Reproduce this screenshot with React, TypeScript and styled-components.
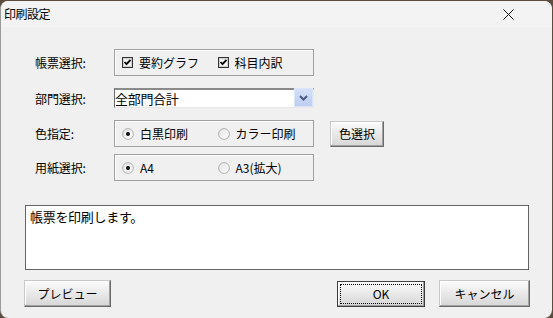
import React from 'react';
import styled, { createGlobalStyle } from 'styled-components';

const GlobalStyle = createGlobalStyle`
  html, body {
    margin: 0;
    padding: 0;
    background: #5c4c40;
  }
  body {
    font-family: "Noto Sans CJK JP", "Liberation Sans", sans-serif;
    font-size: 12px;
    color: #000;
  }
`;

const Window = styled.div`
  width: 552px;
  height: 317px;
  margin-top: 1px;
  background: #f0f0f0;
  border-radius: 8px;
  border-left: 1px solid #9a9a9a;
  box-sizing: border-box;
  overflow: hidden;
  display: flex;
  flex-direction: column;
`;

const TitleBar = styled.div`
  height: 26px;
  background: #f3f3f3;
  display: flex;
  align-items: center;
  justify-content: space-between;
  padding: 0 38px 0 3px;
  line-height: 1;
  flex-shrink: 0;
`;

const Title = styled.span`
  font-size: 12px;
  letter-spacing: -0.5px;
  margin-top: -1px;
`;

const Body = styled.div`
  flex: 1;
  padding: 22px 0 0 23px;
  display: flex;
  flex-direction: column;
`;

const Row = styled.div<{ $top: number }>`
  display: flex;
  align-items: center;
  margin-top: ${(p) => p.$top}px;
  padding-left: 11px;
`;

const Label = styled.div`
  width: 79px;
  font-size: 12px;
  letter-spacing: -0.1px;
`;

const Group = styled.div`
  width: 200px;
  height: 27px;
  box-sizing: border-box;
  border: 1px solid #a0a0a0;
  box-shadow: inset 1px 1px #ffffff;
  display: flex;
  align-items: center;
  padding-left: 7px;
`;

const Option = styled.div`
  width: 97px;
  display: flex;
  align-items: center;
  gap: 6px;
  font-size: 12px;
  white-space: nowrap;
`;

const Combo = styled.div`
  width: 200px;
  height: 20px;
  box-sizing: border-box;
  background: #fff;
  border-top: 2px solid #8a8a8a;
  border-left: 1px solid #6a6a6a;
  border-bottom: 1px solid #e8e8e8;
  border-right: 1px solid #e8e8e8;
  display: flex;
  align-items: center;
  justify-content: space-between;
  font-size: 13px;
`;

const ComboText = styled.span`
  letter-spacing: -0.3px;
`;

const DropButton = styled.div`
  width: 19px;
  height: 19px;
  margin-top: -2px;
  background: linear-gradient(#d4e0f8, #bccdf2);
  border: 1px solid #dce6fa;
  box-sizing: border-box;
  display: flex;
  align-items: center;
  justify-content: center;
`;

const Button = styled.button<{ $w: number; $h?: number; $focus?: boolean }>`
  width: ${(p) => p.$w}px;
  height: ${(p) => p.$h ?? 26}px;
  box-sizing: border-box;
  padding: 0;
  font-family: "Noto Sans CJK JP", "Liberation Sans", sans-serif;
  font-size: 12px;
  color: #000;
  background: linear-gradient(#fbfbfb, #d6d6d6);
  border-style: solid;
  border-width: 1px;
  border-color: ${(p) => (p.$focus ? '#3c3c3c' : '#c8c8c8 #6a6a6a #6a6a6a #c8c8c8')};
  box-shadow: inset -1px -1px #a0a0a0, inset 1px 1px #ffffff;
  position: relative;
  display: flex;
  align-items: center;
  justify-content: center;
  ${(p) =>
    p.$focus
      ? `&::after {
    content: '';
    position: absolute;
    inset: 2px;
    border: 1px dotted #000;
  }`
      : ''}
`;

const TextBox = styled.div`
  margin: 24px 0 0 1px;
  width: 504px;
  height: 65px;
  box-sizing: border-box;
  background: #fff;
  border: 1px solid #646464;
  padding: 1px 4px;
  font-size: 13px;
  letter-spacing: -0.3px;
`;

const Footer = styled.div`
  display: flex;
  align-items: center;
  margin-top: 10px;
  width: 506px;
`;

const Spacer = styled.div`
  flex: 1;
`;

const Check = ({ on }: { on: boolean }) => (
  <svg width="11" height="11" viewBox="0 0 11 11">
    <rect x="0.5" y="0.5" width="10" height="10" fill="#fff" stroke="#333" />
    <rect x="1.5" y="1.5" width="8" height="8" fill="#f4f4f4" stroke="#d0d0d0" />
    {on && <path d="M2.5 5 L4.5 7.2 L8.5 2.8" fill="none" stroke="#000" strokeWidth="1.8" />}
  </svg>
);

const Radio = ({ on }: { on: boolean }) => (
  <svg width="12" height="12" viewBox="0 0 12 12">
    <defs>
      <linearGradient id="rg" x1="0" y1="0" x2="1" y2="1">
        <stop offset="0" stopColor="#e4e4e4" />
        <stop offset="1" stopColor="#ffffff" />
      </linearGradient>
    </defs>
    <circle cx="6" cy="6" r="5.4" fill="url(#rg)" stroke="#a8a8a8" strokeWidth="0.9" />
    {on && <circle cx="6" cy="6" r="2" fill="#111" />}
  </svg>
);

const Chevron = () => (
  <svg width="9" height="6" viewBox="0 0 9 6">
    <path d="M1 1 L4.5 4.5 L8 1" fill="none" stroke="#4a5a7c" strokeWidth="2" />
  </svg>
);

const CloseIcon = () => (
  <svg width="11" height="11" viewBox="0 0 11 11">
    <path d="M0.5 0.5 L10.5 10.5 M10.5 0.5 L0.5 10.5" stroke="#111" strokeWidth="1" />
  </svg>
);

export default function App() {
  return (
    <>
      <GlobalStyle />
      <Window>
        <TitleBar>
          <Title>印刷設定</Title>
          <CloseIcon />
        </TitleBar>
        <Body>
          <Row $top={0}>
            <Label>帳票選択:</Label>
            <Group>
              <Option>
                <Check on />
                要約グラフ
              </Option>
              <Option>
                <Check on />
                科目内訳
              </Option>
            </Group>
          </Row>
          <Row $top={12}>
            <Label>部門選択:</Label>
            <Combo>
              <ComboText>全部門合計</ComboText>
              <DropButton>
                <Chevron />
              </DropButton>
            </Combo>
          </Row>
          <Row $top={12}>
            <Label>色指定:</Label>
            <Group>
              <Option>
                <Radio on />
                白黒印刷
              </Option>
              <Option>
                <Radio on={false} />
                カラー印刷
              </Option>
            </Group>
            <Button $w={54} style={{ marginLeft: 16 }}>
              色選択
            </Button>
          </Row>
          <Row $top={7}>
            <Label>用紙選択:</Label>
            <Group>
              <Option>
                <Radio on />
                A4
              </Option>
              <Option>
                <Radio on={false} />
                A3(拡大)
              </Option>
            </Group>
          </Row>
          <TextBox>帳票を印刷します。</TextBox>
          <Footer>
            <Button $w={87} $h={27}>プレビュー</Button>
            <Spacer />
            <Button $w={88} $h={26} $focus>
              OK
            </Button>
            <Button $w={91} $h={27} style={{ marginLeft: 14 }}>
              キャンセル
            </Button>
          </Footer>
        </Body>
      </Window>
    </>
  );
}
